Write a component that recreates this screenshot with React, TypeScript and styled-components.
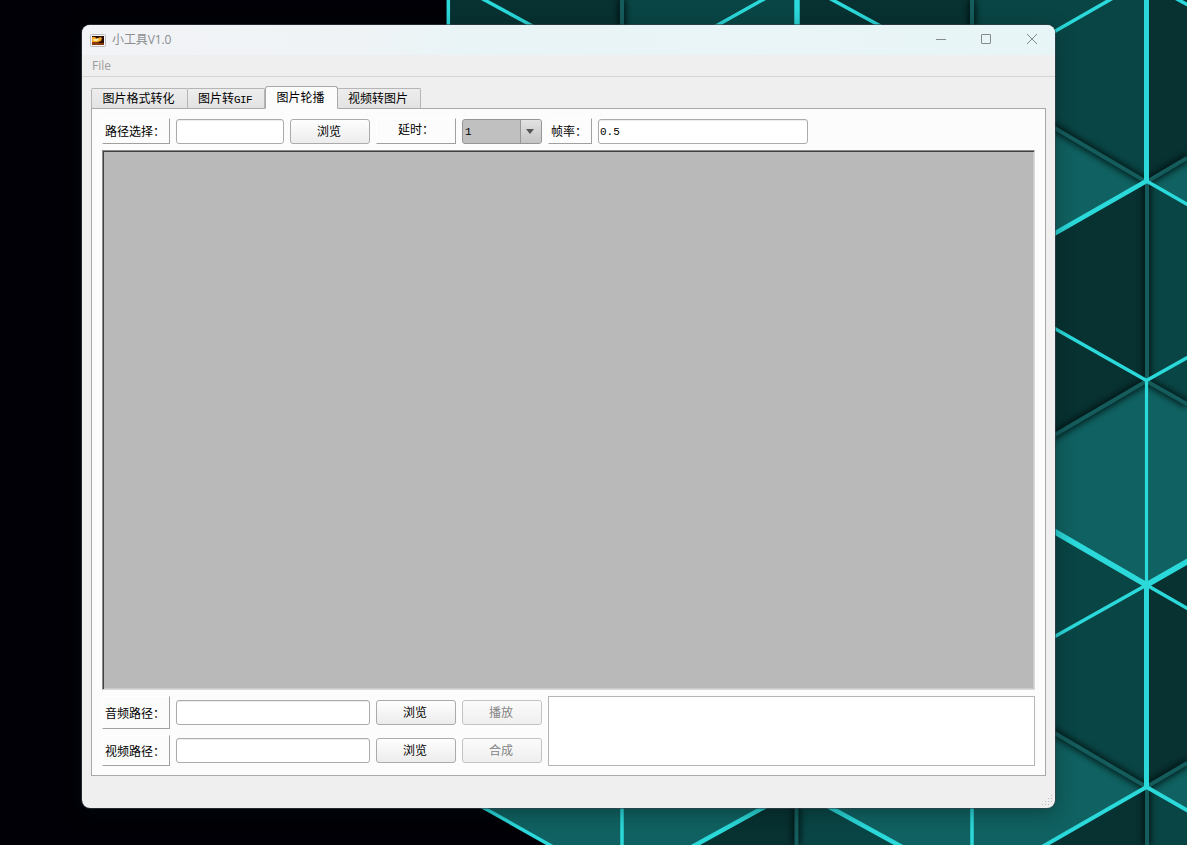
import React from "react";
import styled, { createGlobalStyle, css } from "styled-components";

const GlobalStyle = createGlobalStyle`
  * { box-sizing: border-box; }
  html, body { margin: 0; padding: 0; overflow: hidden; background: #000006; }
  button, input { font: inherit; color: inherit; }
`;

const Desktop = styled.main`
  position: relative;
  width: 1187px;
  height: 845px;
  padding: 25px 0 0 82px;
  overflow: hidden;
  background: #000006;
  font: 12px/14px "Liberation Sans", "Noto Sans CJK SC", sans-serif;
  color: #000;
`;

const WallpaperSvg = styled.svg`
  position: absolute;
  inset: 0;
`;

const Window = styled.section`
  position: relative;
  display: flex;
  flex-direction: column;
  width: 973px;
  height: 783px;
  border-radius: 8px;
  overflow: hidden;
  background: #efefef;
`;

const WindowShadow = styled.div`
  position: relative;
  width: 973px;
  height: 783px;
  border-radius: 8px;
  box-shadow: 0 0 0 1px rgba(60, 65, 75, 0.6), 0 4px 20px rgba(0, 20, 20, 0.4);
`;

const TitleBar = styled.header`
  display: flex;
  align-items: center;
  height: 30px;
  padding-left: 8px;
  background: linear-gradient(90deg, #f1f3f6 0, #f0f3f6 260px, #e9f4f6 380px, #e8f5f6 100%);
`;

const Title = styled.h1`
  flex: 1;
  margin: 0 0 0 6px;
  font: 12px/16px "Open Sans", "Noto Sans CJK SC", sans-serif;
  letter-spacing: -0.1px;
  color: #8b8d8f;
`;

const WindowControls = styled.div`
  display: flex;
  width: 137px;
  height: 30px;
`;

const MenuBar = styled.nav`
  display: flex;
  align-items: center;
  height: 22px;
  padding: 1px 10px 0;
  border-bottom: 1px solid #d5d5d5;
  font: 12px/16px "Open Sans", sans-serif;
  color: #9c9c9c;
`;

const Body = styled.div`
  display: flex;
  flex: 1;
  flex-direction: column;
  padding: 9px 9px 32px;
`;

const TabBar = styled.div`
  display: flex;
  align-items: flex-end;
  height: 23px;
  margin-bottom: -1px;
  z-index: 1;
`;

const Tab = styled.button<{ $width: number; $active?: boolean }>`
  width: ${(p) => p.$width}px;
  height: 21px;
  padding: 2px 2px 0 0;
  border: 1px solid #b5b5b5;
  border-bottom-color: #a9a9a9;
  border-left-width: 0;
  border-radius: 0 2px 0 0;
  background: linear-gradient(#ededed, #e3e3e3);
  line-height: 17px;
  white-space: nowrap;

  &:first-child {
    border-left-width: 1px;
    border-radius: 2px 2px 0 0;
  }

  ${(p) =>
    p.$active &&
    css`
      height: 23px;
      border-left-width: 1px;
      border-color: #a9a9a9;
      border-bottom-color: #fcfcfc;
      border-radius: 3px 3px 0 0;
      background: #fcfcfc;
    `}
`;

const Narrow = styled.span`
  font: 11px/14px "Liberation Mono", monospace;
  letter-spacing: -0.6px;
`;

const Page = styled.div`
  display: flex;
  flex-direction: column;
  flex: 1;
  gap: 6px;
  padding: 9px 10px;
  border: 1px solid #a9a9a9;
  background: #fcfcfc;
`;

const ToolRow = styled.div`
  display: flex;
  align-items: center;
  gap: 6px;
  height: 26px;
`;

const Label = styled.label<{ $width: number; $height?: number; $center?: boolean }>`
  display: flex;
  align-items: center;
  justify-content: ${(p) => (p.$center ? "center" : "flex-start")};
  width: ${(p) => p.$width}px;
  height: ${(p) => p.$height ?? 26}px;
  padding: ${(p) => (p.$center ? "0 0 2px" : "2px 0 0 2px")};
  border: 1px solid;
  border-color: #fff #a0a0a0 #a0a0a0 #fff;
  white-space: nowrap;
`;

const TextField = styled.input<{ $width: number }>`
  width: ${(p) => p.$width}px;
  height: 25px;
  padding: 1px 1px 0;
  border: 1px solid #ababab;
  border-radius: 3px;
  outline: none;
  background: #fff;
  box-shadow: inset 0 1px #ededed;
  font: 11px/14px "Liberation Mono", monospace;
`;

const PushButton = styled.button`
  width: 80px;
  height: 25px;
  padding: 2px 2px 0 0;
  border: 1px solid #ababab;
  border-radius: 3px;
  background: linear-gradient(#fefefe, #ececec);
  line-height: 21px;

  &:disabled {
    border-color: #c3c3c3;
    background: linear-gradient(#fbfbfb, #efefef);
    color: #848484;
  }
`;

const Combo = styled.div`
  display: flex;
  width: 80px;
  height: 25px;
  border: 1px solid #969696;
  border-radius: 3px;
  overflow: hidden;
  background: #c0c0c0;
`;

const ComboValue = styled.span`
  flex: 1;
  padding-left: 2px;
  font: 11px/25px "Liberation Mono", monospace;
`;

const ComboArrow = styled.span`
  display: grid;
  place-items: center;
  width: 21px;
  padding-right: 2px;
  border-left: 1px solid #969696;
  background: linear-gradient(#e2e2e2, #c4c4c4);
`;

const Canvas = styled.div`
  height: 540px;
  border: 1px solid;
  border-color: #8a8a8a #dadada #dadada #8a8a8a;
  background: #b9b9b9;
  box-shadow: inset 1px 1px #404040, inset -1px -1px #cacaca;
`;

const Footer = styled.div`
  display: flex;
  gap: 6px;
  height: 70px;
`;

const MediaRows = styled.div`
  display: flex;
  flex-direction: column;
  gap: 6px;
`;

const MediaRow = styled.div<{ $height: number }>`
  display: flex;
  align-items: center;
  gap: 6px;
  height: ${(p) => p.$height}px;
`;

const Log = styled.div`
  flex: 1;
  border: 1px solid #b5b5b5;
  background: #fff;
`;

const Grip = styled.svg`
  position: absolute;
  right: 1px;
  bottom: 1px;
`;

const CYAN = "#2bd9da";
const LIGHT = "#106161";
const MID = "#0a4545";
const DARK = "#083131";

const facets: [string, string][] = [
  [DARK, "448,0 622,0 622,100 448,100"],
  [MID, "622,0 797,0 797,100 622,100"],
  [DARK, "797,0 972,0 972,100 797,100"],
  [MID, "972,0 1146.5,0 1146.5,181 972,80"],
  [DARK, "1146.5,0 1187,0 1187,158 1146.5,181"],
  [LIGHT, "1000,96 1146.5,181 1000,265"],
  [LIGHT, "1187,158 1146.5,181 1187,205"],
  [DARK, "1000,265 1146.5,181 1146.5,381 1000,467"],
  [MID, "1146.5,181 1187,205 1187,404 1146.5,381"],
  [LIGHT, "1000,467 1146.5,381 1187,404 1187,561 1146.5,585 1000,500"],
  [MID, "1000,500 1146.5,585 1146.5,787 1000,701"],
  [DARK, "1146.5,585 1187,561 1187,763 1146.5,787"],
  [LIGHT, "1000,701 1146.5,787 1000,871"],
  [LIGHT, "1187,763 1146.5,787 1187,811"],
  [LIGHT, "478,806 770,806 695,845 550,845"],
  [DARK, "770,806 797,806 797,845 695,845"],
  [MID, "797,806 822,806 899,845 797,845"],
  [LIGHT, "822,806 1000,701 1146.5,787 1045,845 899,845"],
  [DARK, "1146.5,787 1045,845 1146.5,845"],
  [MID, "1146.5,787 1187,811 1187,845 1146.5,845"],
];

const seams = [
  "M622 0V60",
  "M972 0V60",
  "M1000 96L1146.5 182L1187 158",
  "M1147 182V381",
  "M1000 467L1146.5 381L1187 404",
  "M1000 701L1146.5 787L1187 763",
  "M796.5 800V845",
  "M1147 787V845",
];

const edges: [number, string][] = [
  [3.5, "M448.3 0V60"],
  [3.5, "M481 -2L538 29"],
  [3.5, "M766 -2L707 31"],
  [5.5, "M797 0V60"],
  [3.5, "M829 -2L886 29"],
  [3.5, "M1113 -2L1045 37M1175 -2L1190 6"],
  [5, "M1146.5 0V182"],
  [4.5, "M1146.5 181L1045 239"],
  [3.5, "M1146.5 181L1190 206"],
  [3.5, "M1045 323L1146.5 380.5L1190 356"],
  [3.2, "M1146.5 380V585"],
  [5.5, "M1045 526L1146.5 585L1190 560"],
  [3.5, "M1045 642L1146.5 585L1190 610"],
  [5, "M1146.5 584V787"],
  [4, "M1146.5 787L1042 847M1146.5 787L1190 812"],
  [3.5, "M477 804L555 848"],
  [4.5, "M770 804L690 848"],
  [4.5, "M824 804L904 848"],
  [3.5, "M622 804V845M972 804V845"],
];

const Wallpaper = () => (
  <WallpaperSvg width="1187" height="845" viewBox="0 0 1187 845">
    <defs>
      <filter id="soft" filterUnits="userSpaceOnUse" x="0" y="0" width="1187" height="845" colorInterpolationFilters="sRGB">
        <feGaussianBlur stdDeviation="3" />
      </filter>
    </defs>
    {facets.map(([fill, points]) => (
      <polygon key={points} points={points} fill={fill} stroke={fill} strokeWidth="0.5" />
    ))}
    <g fill="none" stroke="#000c0c" strokeWidth="8" opacity="0.8" filter="url(#soft)">
      {seams.map((d) => <path key={d} d={d} />)}
    </g>
    <g fill="none" stroke="#155c5c" strokeWidth="4">
      {seams.map((d) => <path key={d} d={d} />)}
    </g>
    <g fill="none" stroke={CYAN}>
      {edges.map(([w, d]) => <path key={d} d={d} strokeWidth={w} />)}
    </g>
  </WallpaperSvg>
);

const AppIcon = () => (
  <svg width="16" height="13" viewBox="0 0 16 13">
    <rect x="0.5" y="0.5" width="15" height="12" rx="1" fill="#f7f7f7" stroke="#b9bcc4" />
    <rect x="2" y="2" width="12" height="9" fill="#2a0d05" />
    <path d="M2 3h3l2 2 3-2 2 1-1 3-3 1H2z" fill="#f5a623" />
    <path d="M3 5h3l2-1 1 2-2 1H4z" fill="#ffe9a0" />
    <path d="M2 8h5l3 1h4v2H2z" fill="#8c3a0c" />
  </svg>
);

export default function App() {
  return (
    <Desktop>
      <GlobalStyle />
      <Wallpaper />
      <WindowShadow>
        <Window>
          <TitleBar>
            <AppIcon />
            <Title>小工具V1.0</Title>
            <WindowControls>
              <svg width="137" height="30" fill="none" stroke="#858b8c">
                <path d="M18 14.5h10" />
                <rect x="63.5" y="9.5" width="9" height="9" rx="0.5" />
                <path d="M109 9l10 10M119 9l-10 10" />
              </svg>
            </WindowControls>
          </TitleBar>
          <MenuBar>File</MenuBar>
          <Body>
            <TabBar>
              <Tab $width={97}>图片格式转化</Tab>
              <Tab $width={77}>图片转<Narrow>GIF</Narrow></Tab>
              <Tab $width={73} $active>图片轮播</Tab>
              <Tab $width={83}>视频转图片</Tab>
            </TabBar>
            <Page>
              <ToolRow>
                <Label $width={68}>路径选择：</Label>
                <TextField $width={108} />
                <PushButton>浏览</PushButton>
                <Label $width={80} $center>延时：</Label>
                <Combo>
                  <ComboValue>1</ComboValue>
                  <ComboArrow>
                    <svg width="8" height="5"><path d="M0 0h8L4 5z" fill="#555" /></svg>
                  </ComboArrow>
                </Combo>
                <Label $width={44}>帧率：</Label>
                <TextField $width={210} defaultValue="0.5" />
              </ToolRow>
              <Canvas />
              <Footer>
                <MediaRows>
                  <MediaRow $height={33}>
                    <Label $width={68} $height={33}>音频路径：</Label>
                    <TextField $width={194} />
                    <PushButton>浏览</PushButton>
                    <PushButton disabled>播放</PushButton>
                  </MediaRow>
                  <MediaRow $height={31}>
                    <Label $width={68} $height={31}>视频路径：</Label>
                    <TextField $width={194} />
                    <PushButton>浏览</PushButton>
                    <PushButton disabled>合成</PushButton>
                  </MediaRow>
                </MediaRows>
                <Log />
              </Footer>
            </Page>
          </Body>
          <Grip width="12" height="12" fill="#bdbdbd">
            {[[9, 0], [6, 3], [9, 3], [3, 6], [6, 6], [9, 6], [0, 9], [3, 9], [6, 9]].map(([x, y]) => (
              <rect key={`${x}-${y}`} x={x} y={y} width="1" height="1" />
            ))}
          </Grip>
        </Window>
      </WindowShadow>
    </Desktop>
  );
}
